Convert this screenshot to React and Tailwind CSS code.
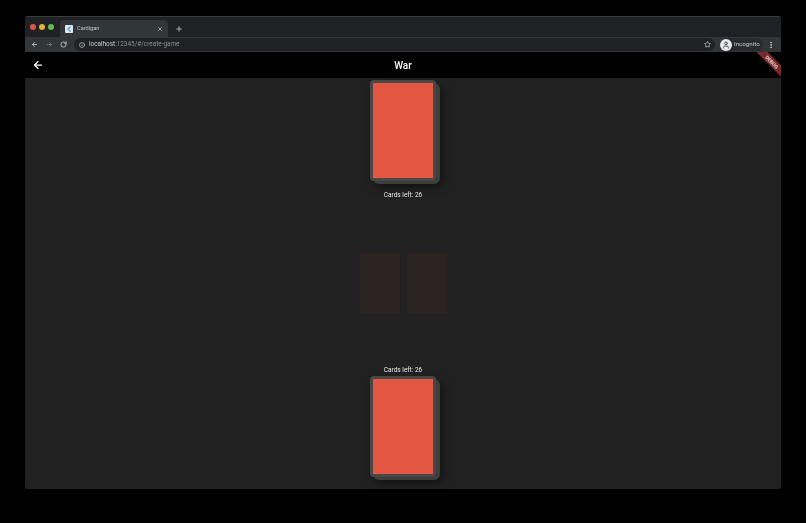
import React from 'react';
import { ArrowLeft, ArrowRight, RotateCw, Info, Star, X, Plus, EllipsisVertical, User } from 'lucide-react';

const CardStack = () => (
  <div className="relative w-[70px] h-[104px] shrink-0">
    <div className="absolute left-[3px] top-[3px] w-[67px] h-[101px] rounded-[6px] bg-[#3d3d3d] shadow-[2px_3px_8px_rgba(0,0,0,0.5)]"></div>
    <div className="absolute left-0 top-0 w-[66px] h-[101px] rounded-[4px] bg-[#484848] p-[3px]">
      <div className="w-full h-full bg-[#e35642]"></div>
    </div>
  </div>
);

const GhostCard = () => (
  <div className="w-[40px] h-[61px] bg-[#2c2423]"></div>
);

const App = () => {
  return (
    <div className="w-[806px] h-[523px] bg-black pt-4 pl-[25px] overflow-hidden font-['Roboto',sans-serif] blur-[0.35px]">
      <div className="w-[756px] h-[473px] flex flex-col rounded-[3px] overflow-hidden border-t border-[#3a3b3d] bg-[#212121]">
        {/* tab strip */}
        <div className="h-[20px] shrink-0 flex items-end bg-[#202124]">
          <div className="flex items-center gap-[3px] w-[35px] pl-[5px] self-center">
            <span className="w-[6px] h-[6px] rounded-full bg-[#e0524d]"></span>
            <span className="w-[6px] h-[6px] rounded-full bg-[#e2b03a]"></span>
            <span className="w-[6px] h-[6px] rounded-full bg-[#5fbb4b]"></span>
          </div>
          <div className="w-[108px] h-[17px] rounded-t-[4px] bg-[#323639] flex items-center pl-[5px] pr-[5px]">
            <span className="w-[8px] h-[8px] bg-[#dfe8ee] rounded-[1px] flex items-center justify-center">
              <svg viewBox="0 0 8 8" className="w-[6px] h-[6px]">
                <path d="M5 0.5 L1.5 4 L3 5.5 L7 0.5 Z M3.2 5.7 L5 7.5 L7 7.5 L5 5 Z" fill="#3f9fe0" />
              </svg>
            </span>
            <span className="ml-[4px] text-[5.6px] leading-none text-[#c4c7ca]">Cardigan</span>
            <X className="ml-auto w-[6px] h-[6px] text-[#c4c7ca]" strokeWidth={3} />
          </div>
          <Plus className="ml-[7px] mb-[4px] w-[8px] h-[8px] text-[#c4c7ca]" strokeWidth={2.5} />
        </div>
        {/* toolbar */}
        <div className="h-[15px] shrink-0 flex items-center bg-[#323639] pl-[6px] pr-[6px]">
          <ArrowLeft className="w-[7px] h-[7px] text-[#c4c7ca]" strokeWidth={3} />
          <ArrowRight className="ml-[8px] w-[7px] h-[7px] text-[#75787b]" strokeWidth={3} />
          <RotateCw className="ml-[7px] w-[7px] h-[7px] text-[#c4c7ca]" strokeWidth={3} />
          <div className="ml-[7px] w-[641px] h-[13px] rounded-full bg-[#202124] flex items-center pl-[5px] pr-[4px]">
            <Info className="w-[6px] h-[6px] text-[#c4c7ca]" strokeWidth={2.5} />
            <span className="ml-[4px] text-[6.4px] leading-none text-[#c9cbcd]">localhost</span>
            <span className="text-[6.4px] leading-none text-[#8a8d90]">:12345/#/create-game</span>
            <Star className="ml-auto w-[7px] h-[7px] text-[#c4c7ca]" strokeWidth={2.5} />
          </div>
          <div className="ml-[5px] h-[13px] w-[43px] rounded-full bg-[#282a2d] flex items-center gap-[2px]">
            <span className="w-[12px] h-[12px] shrink-0 rounded-full bg-[#e8e9ea] flex items-center justify-center">
              <User className="w-[8px] h-[8px] text-[#555]" strokeWidth={3} />
            </span>
            <span className="text-[6.2px] leading-none text-[#c4c7ca]">Incognito</span>
          </div>
          <EllipsisVertical className="ml-auto w-[8px] h-[8px] text-[#c4c7ca]" strokeWidth={3} />
        </div>
        {/* app bar */}
        <div className="relative h-[26px] shrink-0 flex items-center justify-center bg-black overflow-hidden">
          <ArrowLeft className="absolute left-[7px] top-[7px] w-[12px] h-[12px] text-white" strokeWidth={2.5} />
          <span className="pt-[1px] text-[10px] font-medium text-white leading-none">War</span>
          <div className="absolute right-[-15px] top-[6px] w-[48px] h-[8px] bg-[#7a2a2a] rotate-45 flex items-center justify-center">
            <span className="text-[5px] font-bold leading-none text-[#e8d5d5]">DEBUG</span>
          </div>
        </div>
        {/* game board */}
        <div className="flex-1 flex flex-col items-center justify-between bg-[#212121]">
          <div className="flex flex-col items-center pl-[3px] pt-[2px]">
            <CardStack />
            <span className="mt-[7px] mr-[3px] text-[6.5px] leading-[8px] text-[#e8e8e8]">Cards left: 26</span>
          </div>
          <div className="flex gap-[7px] mt-[1px]">
            <GhostCard />
            <GhostCard />
          </div>
          <div className="flex flex-col items-center pl-[3px]">
            <span className="mb-[2px] mr-[3px] text-[6.5px] leading-[8px] text-[#e8e8e8]">Cards left: 26</span>
            <CardStack />
            <div className="h-[9px]"></div>
          </div>
        </div>
      </div>
    </div>
  );
};

export default App;
